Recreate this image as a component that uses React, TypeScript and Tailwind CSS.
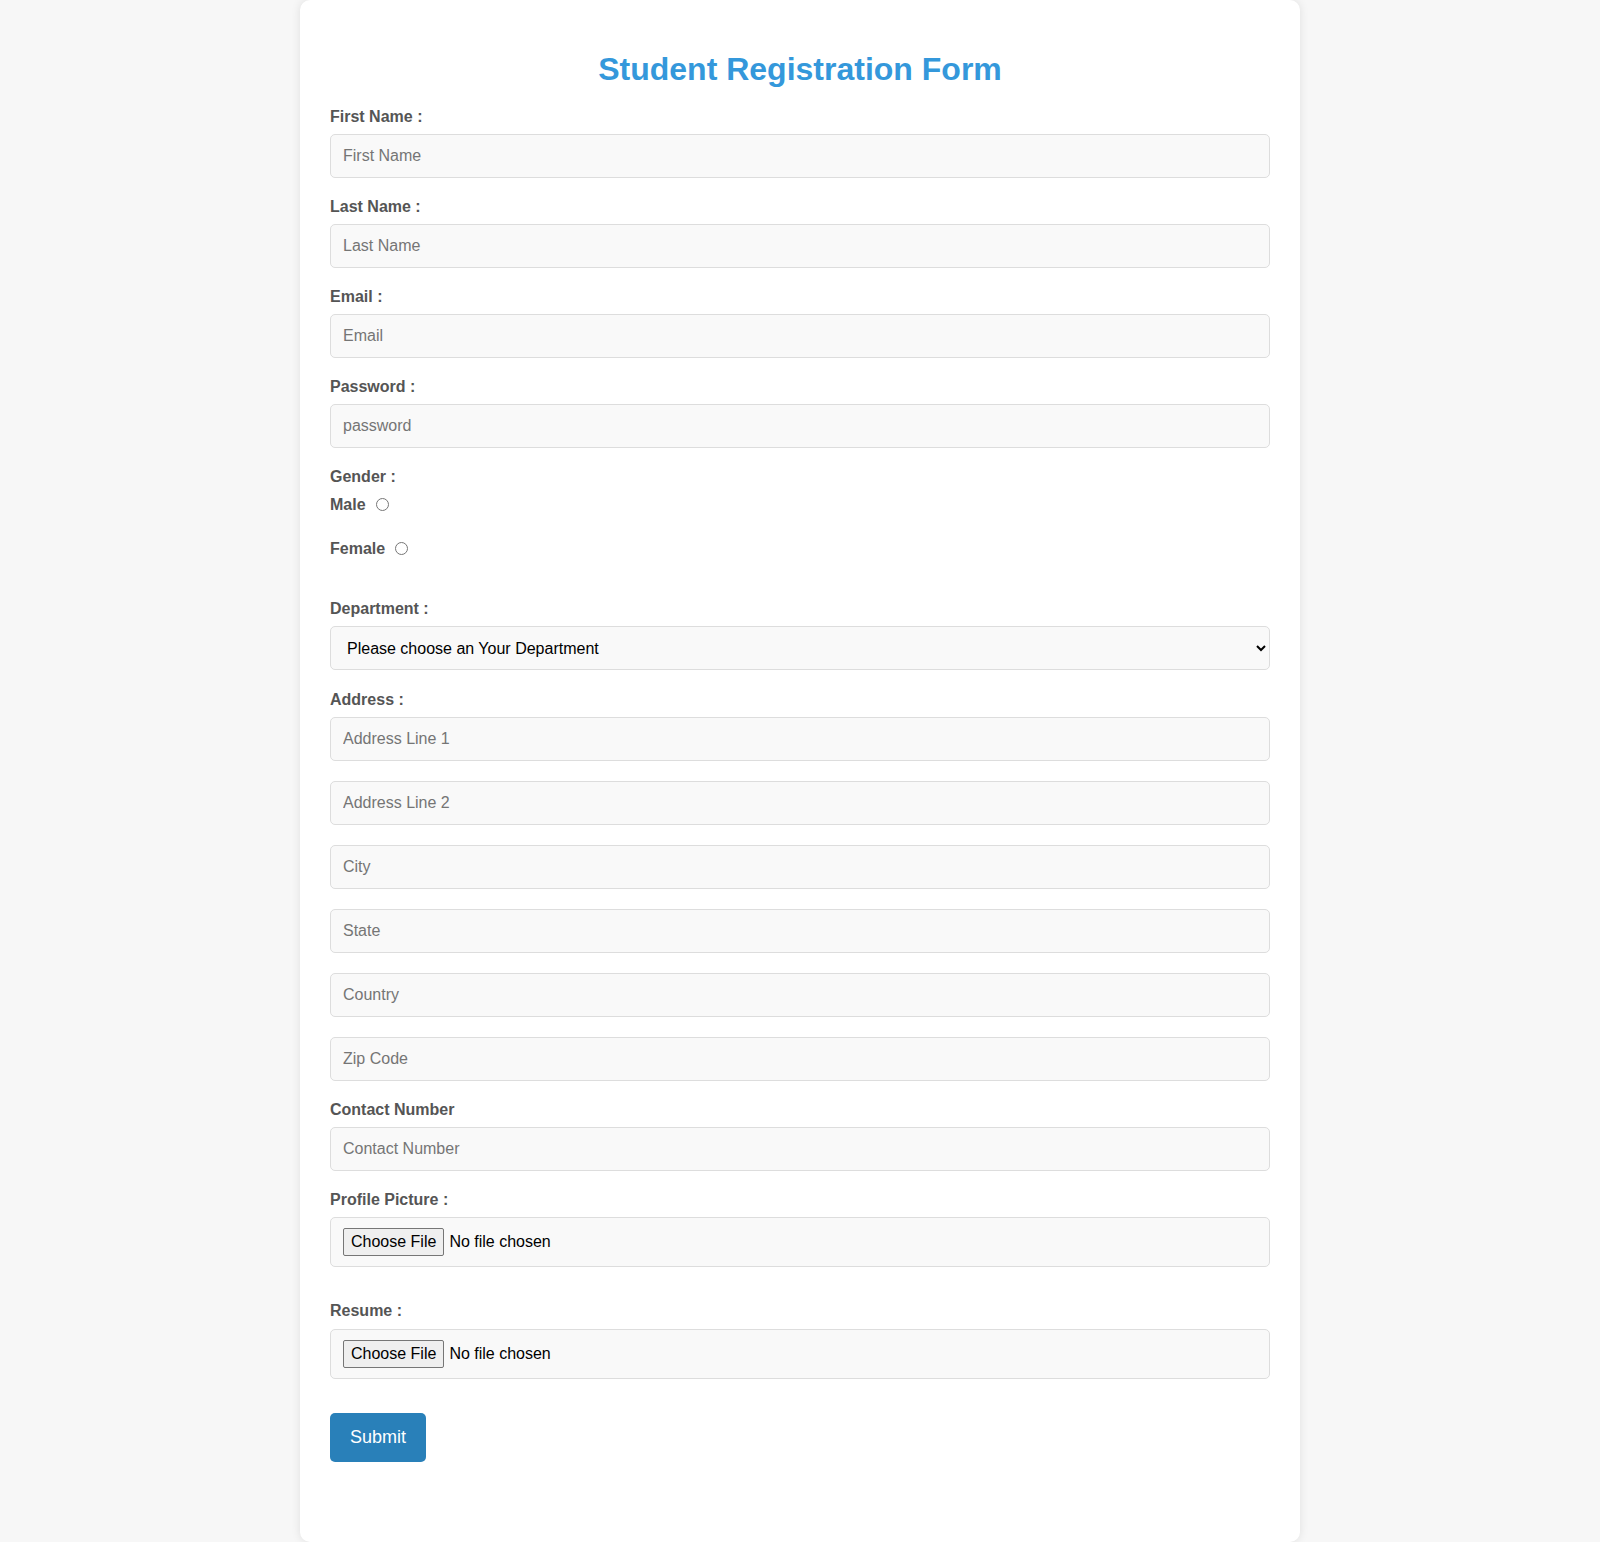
export default function App() {
  const label = "block text-[16px] leading-[18px] font-bold text-[#555]";
  const input =
    "block w-full h-[44px] px-[12px] border border-[#ddd] rounded-[5px] bg-[#f9f9f9] text-[16px] text-[#333] placeholder:text-[#757575] outline-none";
  const fileInput =
    "block w-full h-[50px] px-[12px] pt-[10px] pb-[14px] border border-[#ddd] rounded-[5px] bg-[#f9f9f9] text-[16px] text-black file:mr-[5px] file:border file:border-[#767676] file:rounded-[2px] file:bg-[#efefef] file:px-[7px] file:py-[1px] file:text-black";

  return (
    <div className="min-h-[1542px] bg-[#f7f7f7] font-['Liberation_Sans',Arial,sans-serif]">
      <div className="mx-auto w-[1000px] bg-white rounded-[10px] shadow-[0_0_10px_rgba(0,0,0,0.1)] px-[30px] pt-[30px] pb-[80px]">
        <h2 className="mt-[21px] mb-[20px] text-center text-[32px] leading-[37px] font-bold text-[#3498db]">
          Student Registration Form
        </h2>

        <form onSubmit={(e) => e.preventDefault()}>
          <label className={label}>First Name :</label>
          <input className={`${input} mt-[8px] mb-[20px]`} placeholder="First Name" />

          <label className={label}>Last Name :</label>
          <input className={`${input} mt-[8px] mb-[20px]`} placeholder="Last Name" />

          <label className={label}>Email :</label>
          <input className={`${input} mt-[8px] mb-[20px]`} placeholder="Email" />

          <label className={label}>Password :</label>
          <input type="password" className={`${input} mt-[8px] mb-[20px]`} placeholder="password" />

          {/* gender */}
          <label className={`${label} mb-[10px]`}>Gender :</label>
          <div className="flex items-center h-[18px] mb-[26px]">
            <span className="text-[16px] font-bold text-[#555]">Male</span>
            <input type="radio" name="gender" className="ml-[10px] -mt-[1px] w-[13px] h-[13px]" />
          </div>
          <div className="flex items-center h-[18px] mb-[42px]">
            <span className="text-[16px] font-bold text-[#555]">Female</span>
            <input type="radio" name="gender" className="ml-[10px] -mt-[1px] w-[13px] h-[13px]" />
          </div>

          <label className={label}>Department :</label>
          <select className="block w-full h-[44px] mt-[8px] mb-[21px] pl-[12px] pr-[6px] border border-[#ddd] rounded-[5px] bg-[#f9f9f9] text-[16px] text-black outline-none">
            <option>Please choose an Your Department</option>
            <option>Computer Science</option>
            <option>Electrical</option>
            <option>Mechanical</option>
          </select>

          <label className={label}>Address :</label>
          <input className={`${input} mt-[8px] mb-[20px]`} placeholder="Address Line 1" />
          <input className={`${input} mb-[20px]`} placeholder="Address Line 2" />
          <input className={`${input} mb-[20px]`} placeholder="City" />
          <input className={`${input} mb-[20px]`} placeholder="State" />
          <input className={`${input} mb-[20px]`} placeholder="Country" />
          <input className={`${input} mb-[20px]`} placeholder="Zip Code" />

          <label className={label}>Contact Number</label>
          <input className={`${input} mt-[8px] mb-[20px]`} placeholder="Contact Number" />

          <label className={label}>Profile Picture :</label>
          <input type="file" className={`${fileInput} mt-[8px] mb-[35px]`} />

          <label className={label}>Resume :</label>
          <input type="file" className={`${fileInput} mt-[9px] mb-[34px]`} />

          <button
            type="submit"
            className="h-[49px] px-[20px] rounded-[5px] bg-[#2980b9] text-white text-[18px]"
          >
            Submit
          </button>
        </form>
      </div>
    </div>
  );
}
